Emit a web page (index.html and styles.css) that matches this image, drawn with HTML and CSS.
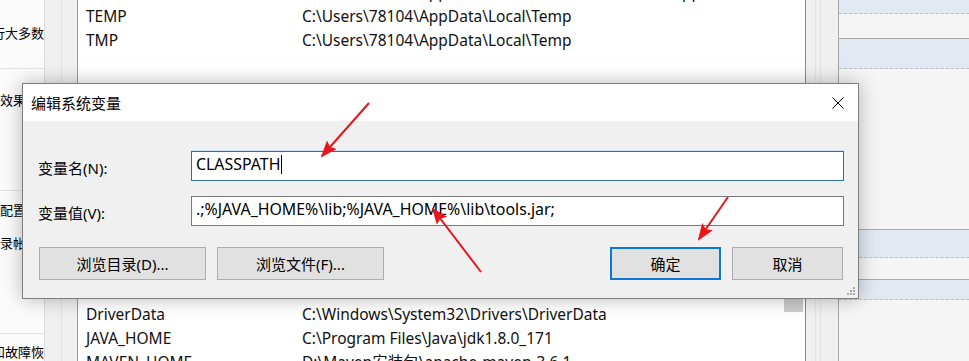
FILE: index.html
```html
<!DOCTYPE html>
<html lang="zh-CN">
  <head>
    <meta charset="UTF-8" />
    <meta name="viewport" content="width=device-width, initial-scale=1.0" />
    <title>编辑系统变量</title>
    <link rel="stylesheet" href="styles.css">
  </head>
  <body>
    <div class="desk">
      <!-- system properties, clipped on the left -->
      <div class="side">
        <div class="side__block side__block--a">
          <p class="side__text side__text--far">要进行大多数更改</p>
        </div>
        <div class="side__block side__block--b">
          <p class="side__text side__text--near">视觉效果，处理器</p>
        </div>
        <div class="side__block side__block--c">
          <p class="side__text side__text--near">用户配置文件</p>
          <p class="side__text side__text--near">与登录帐户相关</p>
        </div>
        <div class="side__block">
          <p class="side__text side__text--far">启动和故障恢复</p>
        </div>
      </div>

      <div class="gutter"></div>

      <!-- environment variables lists -->
      <div class="lists">
        <div class="list list--user">
          <div class="list__rows list__rows--scrolled">
            <div class="row"><span>Path</span><span>C:\Users\78104\AppData\Local\Microsoft\WindowsApps;</span></div>
            <div class="row"><span>TEMP</span><span>C:\Users\78104\AppData\Local\Temp</span></div>
            <div class="row"><span>TMP</span><span>C:\Users\78104\AppData\Local\Temp</span></div>
          </div>
        </div>
        <div class="list list--sys">
          <div class="list__rows list__rows--sys">
            <div class="row"><span>DriverData</span><span>C:\Windows\System32\Drivers\DriverData</span></div>
            <div class="row"><span>JAVA_HOME</span><span>C:\Program Files\Java\jdk1.8.0_171</span></div>
            <div class="row"><span>MAVEN_HOME</span><span>D:\Maven安装包\apache-maven-3.6.1</span></div>
          </div>
          <div class="vscroll"><div class="vscroll__thumb"></div></div>
        </div>
      </div>

      <div class="gutter gutter--right"></div>

      <!-- task list on the right -->
      <div class="tasks">
        <div class="tasks__item tasks__item--sel" style="height: 14px"></div>
        <div class="tasks__item" style="height: 25px"></div>
        <div class="tasks__item tasks__item--sel" style="height: 30px"></div>
        <div class="tasks__item" style="height: 161px"></div>
        <div class="tasks__item tasks__item--sel" style="height: 28px"></div>
        <div class="tasks__item" style="height: 22px"></div>
        <div class="tasks__item tasks__item--sel" style="height: 20px"></div>
      </div>
    </div>

    <div class="dialog">
      <div class="dialog__title">
        <span>编辑系统变量</span>
        <svg class="dialog__close" viewBox="0 0 12 12" width="12" height="12">
          <path d="M0.5 0.5 L11.5 11.5 M11.5 0.5 L0.5 11.5" stroke="#000" stroke-width="1" fill="none" />
        </svg>
      </div>
      <div class="dialog__body">
        <div class="form">
          <label class="form__label">变量名(N):</label>
          <div class="field field--focus">CLASSPATH<span class="field__caret"></span></div>
          <label class="form__label">变量值(V):</label>
          <div class="field">.;%JAVA_HOME%\lib;%JAVA_HOME%\lib\tools.jar;</div>
        </div>
        <div class="actions">
          <button class="btn btn--wide" type="button">浏览目录(D)...</button>
          <button class="btn btn--wide" type="button">浏览文件(F)...</button>
          <button class="btn btn--default" type="button">确定</button>
          <button class="btn" type="button">取消</button>
        </div>
      </div>
      <svg class="dialog__grip" viewBox="0 0 11 11" width="11" height="11">
        <rect x="8" y="2" width="2" height="2" />
        <rect x="5" y="5" width="2" height="2" />
        <rect x="8" y="5" width="2" height="2" />
        <rect x="2" y="8" width="2" height="2" />
        <rect x="5" y="8" width="2" height="2" />
        <rect x="8" y="8" width="2" height="2" />
      </svg>
    </div>

    <!-- red annotation arrows -->
    <svg class="marks" viewBox="0 0 969 361" width="969" height="361">
      <defs>
        <marker id="head" markerUnits="userSpaceOnUse" markerWidth="17" markerHeight="13" refX="15" refY="6.5" orient="auto">
          <path d="M0 0 L17 6.5 L0 13 L3 6.5 Z" fill="#e8151b" />
        </marker>
      </defs>
      <line x1="369" y1="103" x2="322" y2="156" stroke="#e8151b" stroke-width="2" marker-end="url(#head)" />
      <line x1="481" y1="272" x2="433" y2="209" stroke="#e8151b" stroke-width="2" marker-end="url(#head)" />
      <line x1="728" y1="197" x2="699" y2="239" stroke="#e8151b" stroke-width="2" marker-end="url(#head)" />
    </svg>
  </body>
</html>
```

FILE: styles.css
```css
* {
  box-sizing: border-box;
  margin: 0;
  padding: 0;
}
body {
  position: relative;
  width: 969px;
  height: 361px;
  overflow: hidden;
  background: #f0f0f0;
  color: #000;
  font: 15px/1.2 "Noto Sans", "Noto Sans CJK SC", sans-serif;
}
.desk {
  display: flex;
  height: 361px;
}

/* left panel */
.side {
  width: 45px;
  background: #fbfbfb;
  border-right: 1px solid #dadada;
  overflow: hidden;
}
.side__block {
  border-bottom: 1px solid #e3e3e3;
  white-space: nowrap;
}
.side__block--a {
  height: 69px;
  padding-top: 23px;
}
.side__block--b {
  height: 122px;
  padding-top: 21px;
}
.side__block--c {
  height: 143px;
  padding-top: 9px;
}
.side__text {
  font-size: 13px;
  line-height: 20px;
  margin-bottom: 13px;
}
.side__text--far {
  margin-left: -34px;
}
.side__text--near {
  margin-left: -26px;
}
.side__block:last-child .side__text {
  margin-top: 8px;
}

/* splitters */
.gutter {
  width: 32px;
  background: linear-gradient(90deg, #f0f0f0 16px, #e1e1e1 16px 17px, #f0f0f0 17px);
}
.gutter--right {
  background: linear-gradient(90deg, #f0f0f0 9px, #e4e4e4 9px 10px, #f0f0f0 10px 14px, #e4e4e4 14px 15px, #f0f0f0 15px);
}

/* lists */
.lists {
  flex: 1;
  display: flex;
  flex-direction: column;
  background: #fff;
  border-left: 1px solid #9a9a9a;
  border-right: 1px solid #8a8a8a;
}
.list {
  overflow: hidden;
}
.list--user {
  height: 254px;
}
.list--sys {
  flex: 1;
  display: flex;
}
.list__rows {
  flex: 1;
}
.list__rows--scrolled {
  margin-top: -20px;
}
.list__rows--sys {
  padding-top: 48px;
}
.row {
  display: grid;
  grid-template-columns: 216px 1fr;
  height: 24px;
  line-height: 24px;
  padding-left: 8px;
  font-size: 15.5px;
  white-space: nowrap;
  color: #111;
}
.vscroll {
  width: 19px;
  margin-right: 2px;
}
.vscroll__thumb {
  height: 58px;
  background: #cdcdcd;
}

/* right panel */
.tasks {
  width: 131px;
  background: #f5f5f5;
  border-left: 1px solid #a8a8a8;
}
.tasks__item {
  border-bottom: 1px solid #a9a9a9;
}
.tasks__item--sel {
  background: #e2e9f3;
  border-bottom: 1px dashed #b9bec6;
}

/* dialog window */
.dialog {
  position: absolute;
  left: 22px;
  top: 83px;
  width: 837px;
  height: 216px;
  display: flex;
  flex-direction: column;
  background: #f0f0f0;
  border: 1px solid #7e7e7e;
  box-shadow: 0 0 18px rgba(0, 0, 0, 0.28);
}
.dialog__title {
  height: 37px;
  display: flex;
  align-items: center;
  justify-content: space-between;
  padding: 0 14px 0 8px;
  background: #fff;
}
.dialog__close {
  display: block;
}
.dialog__body {
  flex: 1;
  padding: 30px 14px 18px 15px;
}
.form {
  display: grid;
  grid-template-columns: 153px 1fr;
  row-gap: 15px;
  align-items: center;
}
.form__label {
  padding-top: 3px;
}
.field {
  height: 30px;
  padding: 0 4px 3px;
  display: flex;
  align-items: center;
  background: #fff;
  border: 1px solid #7a7a7a;
  font-size: 15.9px;
  white-space: nowrap;
}
.field--focus {
  border-color: #2e6fa9;
  box-shadow: 0 -1px 0 #cfe5f7;
}
.field__caret {
  width: 1px;
  height: 19px;
  margin-left: 1px;
  background: #000;
}
.actions {
  display: flex;
  gap: 11px;
  margin: 21px 1px 0;
}
.btn {
  width: 111px;
  height: 33px;
  font: inherit;
  color: #000;
  background: #e1e1e1;
  border: 1px solid #adadad;
}
.btn--wide {
  width: 167px;
}
.btn--default {
  margin-left: auto;
  border: 2px solid #0a78d4;
}
.dialog__grip {
  position: absolute;
  right: 2px;
  bottom: 2px;
  fill: #a8a8a8;
}

/* annotations */
.marks {
  position: absolute;
  left: 0;
  top: 0;
  pointer-events: none;
}
```
